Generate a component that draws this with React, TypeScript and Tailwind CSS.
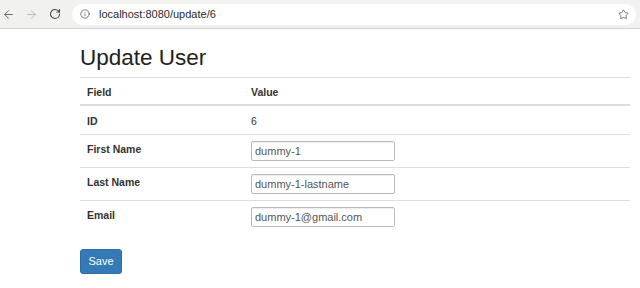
import { ArrowLeft, ArrowRight, RotateCw, Info, Star } from 'lucide-react'

const rows = [
  { label: 'First Name', value: 'dummy-1' },
  { label: 'Last Name', value: 'dummy-1-lastname' },
  { label: 'Email', value: 'dummy-1@gmail.com' },
]

function BrowserBar() {
  return (
    <div className="flex h-[29px] items-center border-b border-[#d2d2d2] bg-[#f1f1f0]">
      <div className="flex w-[72px] items-center pl-[2px] text-[#555]">
        <ArrowLeft size={13} strokeWidth={1.6} />
        <ArrowRight size={13} strokeWidth={1.6} className="ml-[10px] text-[#b3b3b3]" />
        <RotateCw size={12} strokeWidth={2.2} className="ml-[11px] text-[#444]" />
      </div>
      <div className="mr-[4px] flex h-[21px] flex-1 items-center rounded-full bg-white pl-[8px] pr-[7px]">
        <Info size={10} strokeWidth={1.6} className="text-[#444]" />
        <span className="ml-[9px] text-[11px] text-[#2a2a2a]">localhost:8080/update/6</span>
        <Star size={11} strokeWidth={1.5} className="ml-auto text-[#444]" />
      </div>
    </div>
  )
}

export default function App() {
  return (
    <div className="h-[288px] w-[640px] overflow-hidden bg-white font-['Liberation_Sans',Arial,sans-serif] text-[#333]">
      <BrowserBar />
      <div className="ml-[80px] w-[550px]">
        <h2 className="mt-[16px] mb-[7px] text-[22.5px] leading-[25px] text-[#222]">Update User</h2>

        <div className="text-[10.5px] leading-[15px]">
          <div className="grid grid-cols-[171px_1fr] border-t border-b-2 border-[#dddddd] font-bold">
            <div className="px-[7px] pt-[6.5px] pb-[4.5px]">Field</div>
            <div className="pt-[6.5px] pb-[4.5px]">Value</div>
          </div>
          <div className="grid grid-cols-[171px_1fr] border-b border-[#dddddd]">
            <div className="px-[7px] pt-[8px] pb-[5px] font-bold">ID</div>
            <div className="pt-[8px] pb-[5px]">6</div>
          </div>
          {rows.map((r, i) => (
            <div
              key={r.label}
              className={
                'grid grid-cols-[171px_1fr] ' + (i < rows.length - 1 ? 'border-b border-[#dddddd]' : '')
              }
            >
              <div className="px-[7px] pt-[7px] font-bold">{r.label}</div>
              <div className="py-[6px]">
                <input
                  defaultValue={r.value}
                  className="h-[20px] w-[144px] rounded-[2px] border border-[#bbbbbb] px-[3px] text-[11px] text-[#555] shadow-[inset_0_1px_1px_rgba(0,0,0,0.075)] outline-none"
                />
              </div>
            </div>
          ))}
        </div>

        <button className="mt-[16px] h-[25px] w-[42px] rounded-[3px] border border-[#2e6da4] bg-[#337ab7] text-[11px] text-white">
          Save
        </button>
      </div>
    </div>
  )
}
